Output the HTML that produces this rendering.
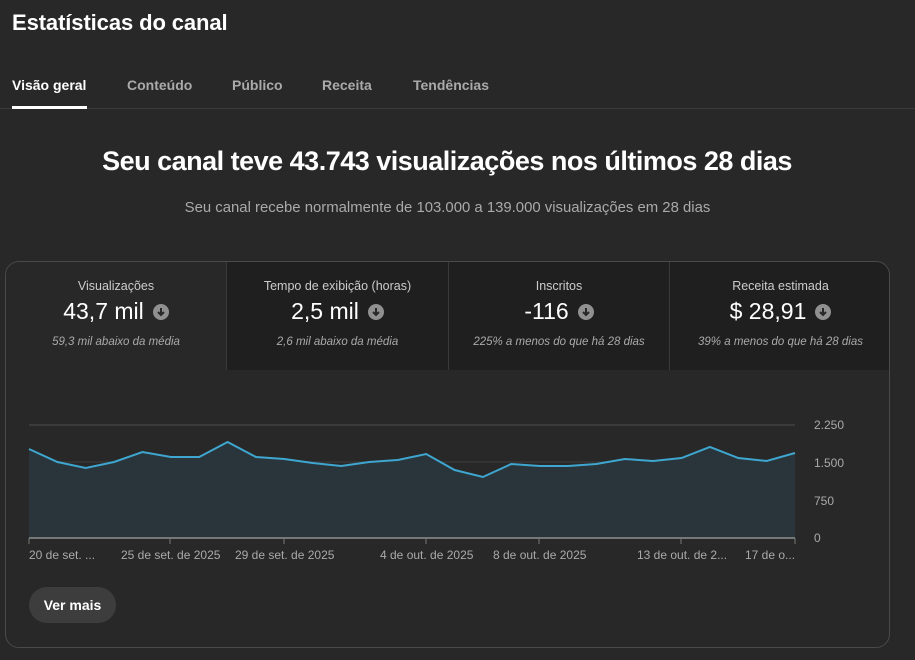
<!DOCTYPE html>
<html><head><meta charset="utf-8"><style>
*{margin:0;padding:0;box-sizing:border-box}
body{width:915px;height:660px;background:#282828;font-family:"Liberation Sans",sans-serif;color:#fff;position:relative;overflow:hidden}
.abs{position:absolute}
h1{position:absolute;left:12px;top:10px;font-size:22px;font-weight:bold;letter-spacing:-0.1px}
.tab{position:absolute;top:77px;font-size:14px;font-weight:bold;color:#aaa}
.hr{position:absolute;left:0;right:0;top:108px;height:1px;background:#3a3a3a}
.card{position:absolute;left:5px;top:261px;width:885px;height:387px;border:1px solid #4a4a4a;border-radius:14px;overflow:hidden}
.m{position:absolute;top:0;height:108px;text-align:center;background:#1f1f1f;border-left:1px solid #3a3a3a}
.m .t{margin-top:17px;font-size:12.5px;color:#ccc}
.m .v{margin-top:5px;font-size:23px;color:#fff;display:flex;justify-content:center;align-items:center;gap:9px}
.m .s{margin-top:11px;font-size:11.5px;font-style:italic;color:#aaa}
.ic{width:16px;height:16px;border-radius:50%;background:#909090;display:inline-block;position:relative}
.ic svg{position:absolute;left:0;top:0}
.lbl{position:absolute;top:548px;font-size:12px;color:#aaa;white-space:nowrap}
.yl{position:absolute;left:814px;font-size:12px;color:#aaa}
</style></head><body>
<h1>Estatísticas do canal</h1>
<div class="tab" style="left:12px;color:#fff">Visão geral</div>
<div class="tab" style="left:127px">Conteúdo</div>
<div class="tab" style="left:232px">Público</div>
<div class="tab" style="left:322px">Receita</div>
<div class="tab" style="left:413px">Tendências</div>
<div class="hr"></div>
<div class="abs" style="left:12px;top:106px;width:75px;height:3px;background:#fff"></div>
<div class="abs" style="left:0;width:894px;top:146px;text-align:center;font-size:27px;font-weight:bold;letter-spacing:-0.5px">Seu canal teve 43.743 visualizações nos últimos 28 dias</div>
<div class="abs" style="left:0;width:895px;top:200px;text-align:center;font-size:14.9px;color:#aaa">Seu canal recebe normalmente de 103.000 a 139.000 visualizações em 28 dias</div>
<div class="card">
<div class="m" style="left:0;width:220px;background:#282828;border-left:none"><div class="t">Visualizações</div><div class="v">43,7 mil <span class="ic"><svg width="16" height="16"><path d="M8 4v7M5 8l3 3 3-3" stroke="#282828" stroke-width="2" fill="none"/></svg></span></div><div class="s">59,3 mil abaixo da média</div></div>
<div class="m" style="left:220px;width:222px"><div class="t">Tempo de exibição (horas)</div><div class="v">2,5 mil <span class="ic"><svg width="16" height="16"><path d="M8 4v7M5 8l3 3 3-3" stroke="#282828" stroke-width="2" fill="none"/></svg></span></div><div class="s">2,6 mil abaixo da média</div></div>
<div class="m" style="left:442px;width:221px"><div class="t">Inscritos</div><div class="v">-116 <span class="ic"><svg width="16" height="16"><path d="M8 4v7M5 8l3 3 3-3" stroke="#282828" stroke-width="2" fill="none"/></svg></span></div><div class="s">225% a menos do que há 28 dias</div></div>
<div class="m" style="left:663px;width:222px"><div class="t">Receita estimada</div><div class="v">$ 28,91 <span class="ic"><svg width="16" height="16"><path d="M8 4v7M5 8l3 3 3-3" stroke="#282828" stroke-width="2" fill="none"/></svg></span></div><div class="s">39% a menos do que há 28 dias</div></div>
</div>
<svg class="abs" style="left:0;top:0" width="915" height="660">
<line x1="29" y1="425" x2="795" y2="425" stroke="#3a3a3a" stroke-width="2"/>
<line x1="29" y1="462" x2="795" y2="462" stroke="#333" stroke-width="2"/>
<line x1="29" y1="500" x2="795" y2="500" stroke="#333" stroke-width="2"/>
<polygon fill="#29353b" points="29,538 29,449 57.4,462 85.7,468 114.1,462 142.5,452 170.9,457 199.2,457 227.6,442 256,457 284.3,459 312.7,463 341.1,466 369.4,462 397.8,460 426.2,454 454.6,470 482.9,477 511.3,464 539.7,466 568,466 596.4,464 624.8,459 653.1,461 681.5,458 709.9,447 738.3,458 766.6,461 795,453 795,538"/>
<polyline fill="none" stroke="#3ea6cf" stroke-width="2" points="29,449 57.4,462 85.7,468 114.1,462 142.5,452 170.9,457 199.2,457 227.6,442 256,457 284.3,459 312.7,463 341.1,466 369.4,462 397.8,460 426.2,454 454.6,470 482.9,477 511.3,464 539.7,466 568,466 596.4,464 624.8,459 653.1,461 681.5,458 709.9,447 738.3,458 766.6,461 795,453"/>
<line x1="29" y1="538" x2="795" y2="538" stroke="#909090" stroke-width="1.5"/>
<g stroke="#777" stroke-width="1"><line x1="29" y1="538" x2="29" y2="544"/><line x1="170" y1="538" x2="170" y2="544"/><line x1="284" y1="538" x2="284" y2="544"/><line x1="426" y1="538" x2="426" y2="544"/><line x1="539" y1="538" x2="539" y2="544"/><line x1="681" y1="538" x2="681" y2="544"/><line x1="795" y1="538" x2="795" y2="544"/></g>
</svg>
<div class="yl" style="top:418px">2.250</div>
<div class="yl" style="top:456px">1.500</div>
<div class="yl" style="top:494px">750</div>
<div class="yl" style="top:531px">0</div>
<div class="lbl" style="left:29px">20 de set. ...</div>
<div class="lbl" style="left:121px">25 de set. de 2025</div>
<div class="lbl" style="left:235px">29 de set. de 2025</div>
<div class="lbl" style="left:380px">4 de out. de 2025</div>
<div class="lbl" style="left:493px">8 de out. de 2025</div>
<div class="lbl" style="left:637px">13 de out. de 2...</div>
<div class="lbl" style="left:745px">17 de o...</div>
<div class="abs" style="left:29px;top:587px;width:87px;height:36px;border-radius:18px;background:#3d3d3d;font-size:14px;font-weight:bold;text-align:center;line-height:36px">Ver mais</div>
</body></html>
